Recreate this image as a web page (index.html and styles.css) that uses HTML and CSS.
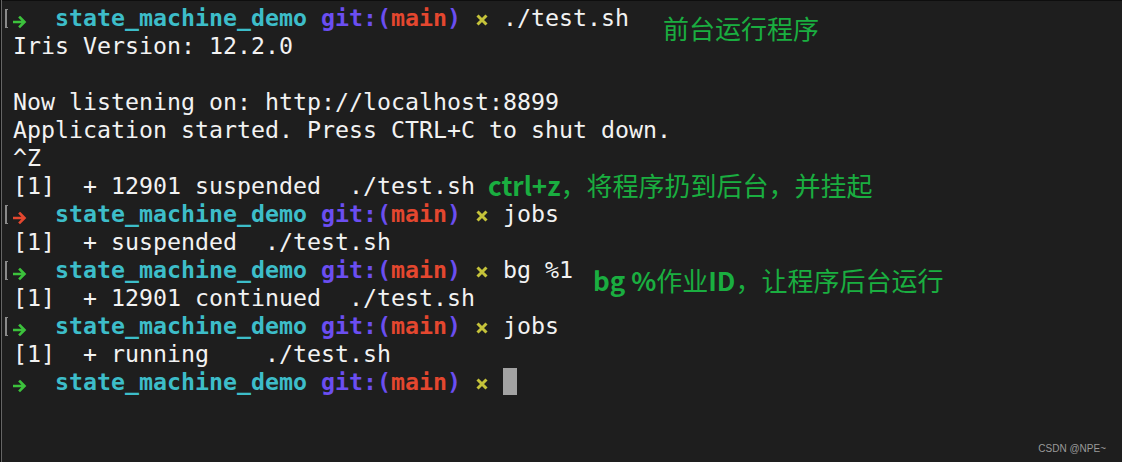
FILE: index.html
```html
<!DOCTYPE html>
<html lang="zh">
<head>
<meta charset="utf-8">
<title>terminal</title>
<link rel="stylesheet" href="styles.css">
</head>
<body>
<div class="screen">
  <div class="row"><span class="mark"></span><span class="line"><svg class="arrow ok" viewBox="0 0 14 28" width="14" height="28"><path d="M1 18h9M7 13.5l4.5 4.5-4.5 4.5" fill="none" stroke="currentColor" stroke-width="2.6" stroke-linecap="square" stroke-linejoin="miter"/></svg>  <span class="dir">state_machine_demo</span> <span class="git">git:(</span><span class="br">main</span><span class="git">)</span> <svg class="x" viewBox="0 0 14 28" width="14" height="28"><path d="M2.5 11.5l9 9M11.5 11.5l-9 9" fill="none" stroke="currentColor" stroke-width="3"/></svg> ./test.sh</span><span class="note n1">前台运行程序</span></div>
  <div class="row"><span class="gap"></span><span class="line">Iris Version: 12.2.0</span></div>
  <div class="row"><span class="gap"></span><span class="line"></span></div>
  <div class="row"><span class="gap"></span><span class="line">Now listening on: http://localhost:8899</span></div>
  <div class="row"><span class="gap"></span><span class="line">Application started. Press CTRL+C to shut down.</span></div>
  <div class="row"><span class="gap"></span><span class="line">^Z</span></div>
  <div class="row"><span class="gap"></span><span class="line">[1]  + 12901 suspended  ./test.sh</span><span class="note n2"><b>ctrl+z</b>，将程序扔到后台，并挂起</span></div>
  <div class="row"><span class="mark"></span><span class="line"><svg class="arrow bad" viewBox="0 0 14 28" width="14" height="28"><path d="M1 18h9M7 13.5l4.5 4.5-4.5 4.5" fill="none" stroke="currentColor" stroke-width="2.6" stroke-linecap="square"/></svg>  <span class="dir">state_machine_demo</span> <span class="git">git:(</span><span class="br">main</span><span class="git">)</span> <svg class="x" viewBox="0 0 14 28" width="14" height="28"><path d="M2.5 11.5l9 9M11.5 11.5l-9 9" fill="none" stroke="currentColor" stroke-width="3"/></svg> jobs</span></div>
  <div class="row"><span class="gap"></span><span class="line">[1]  + suspended  ./test.sh</span></div>
  <div class="row"><span class="mark"></span><span class="line"><svg class="arrow ok" viewBox="0 0 14 28" width="14" height="28"><path d="M1 18h9M7 13.5l4.5 4.5-4.5 4.5" fill="none" stroke="currentColor" stroke-width="2.6" stroke-linecap="square"/></svg>  <span class="dir">state_machine_demo</span> <span class="git">git:(</span><span class="br">main</span><span class="git">)</span> <svg class="x" viewBox="0 0 14 28" width="14" height="28"><path d="M2.5 11.5l9 9M11.5 11.5l-9 9" fill="none" stroke="currentColor" stroke-width="3"/></svg> bg %1</span><span class="note n3"><b>bg %</b>作业<b>ID</b>，让程序后台运行</span></div>
  <div class="row"><span class="gap"></span><span class="line">[1]  + 12901 continued  ./test.sh</span></div>
  <div class="row"><span class="mark"></span><span class="line"><svg class="arrow ok" viewBox="0 0 14 28" width="14" height="28"><path d="M1 18h9M7 13.5l4.5 4.5-4.5 4.5" fill="none" stroke="currentColor" stroke-width="2.6" stroke-linecap="square"/></svg>  <span class="dir">state_machine_demo</span> <span class="git">git:(</span><span class="br">main</span><span class="git">)</span> <svg class="x" viewBox="0 0 14 28" width="14" height="28"><path d="M2.5 11.5l9 9M11.5 11.5l-9 9" fill="none" stroke="currentColor" stroke-width="3"/></svg> jobs</span></div>
  <div class="row"><span class="gap"></span><span class="line">[1]  + running    ./test.sh</span></div>
  <div class="row"><span class="gap"></span><span class="line"><svg class="arrow ok" viewBox="0 0 14 28" width="14" height="28"><path d="M1 18h9M7 13.5l4.5 4.5-4.5 4.5" fill="none" stroke="currentColor" stroke-width="2.6" stroke-linecap="square"/></svg>  <span class="dir">state_machine_demo</span> <span class="git">git:(</span><span class="br">main</span><span class="git">)</span> <svg class="x" viewBox="0 0 14 28" width="14" height="28"><path d="M2.5 11.5l9 9M11.5 11.5l-9 9" fill="none" stroke="currentColor" stroke-width="3"/></svg> <span class="cursor"></span></span></div>
  <div class="watermark">CSDN @NPE~</div>
</div>
</body>
</html>
```
FILE: styles.css
```css
html, body {
  margin: 0;
  padding: 0;
  background: #1e1e1e;
}
.screen {
  position: relative;
  width: 1122px;
  height: 462px;
  box-sizing: border-box;
  padding-top: 4px;
  display: flex;
  flex-direction: column;
  background: #1e1e1e;
  box-shadow: inset 1px 0 0 #0e0e0e, inset 2px 0 0 #656565, inset 0 1px 0 #0e0e0e;
  font-family: "DejaVu Sans Mono", "Liberation Mono", monospace;
  font-size: 23.25px;
  color: #f2f2f2;
}
.row {
  position: relative;
  display: flex;
  align-items: center;
  height: 28px;
  flex: none;
}
.gap {
  width: 13px;
  flex: none;
}
.mark {
  flex: none;
  box-sizing: border-box;
  margin-left: 5px;
  margin-right: 5px;
  width: 3px;
  height: 19px;
  border-left: 2px solid #8a8a8a;
  border-top: 1px solid #8a8a8a;
  border-bottom: 1px solid #8a8a8a;
}
.line {
  display: block;
  white-space: pre;
  line-height: 28px;
  height: 28px;
}
.arrow, .x {
  display: inline-block;
  vertical-align: top;
  width: 14px;
  height: 28px;
}
.ok { color: #3cc23c; }
.bad { color: #e4472f; }
.dir { color: #3dbdc9; font-weight: bold; }
.git { color: #6b4ef1; font-weight: bold; }
.br { color: #e4472f; font-weight: bold; }
.x { color: #c5c33a; }
.cursor {
  display: inline-block;
  vertical-align: top;
  width: 14px;
  height: 27px;
  background: #a3a3a3;
}
.note {
  position: absolute;
  font-family: "Noto Sans CJK SC", "Noto Sans", sans-serif;
  font-size: 26px;
  line-height: 24px;
  color: #1aae40;
  white-space: nowrap;
}
.note b { font-weight: bold; }
.n1 { left: 663px; top: 12px; }
.n2 { left: 488px; top: 1px; }
.n3 { left: 593px; top: 12px; }
.watermark {
  position: absolute;
  right: 16px;
  bottom: 8px;
  font-family: "Liberation Sans", Arial, sans-serif;
  font-size: 10px;
  color: #9a9a9a;
}
```
